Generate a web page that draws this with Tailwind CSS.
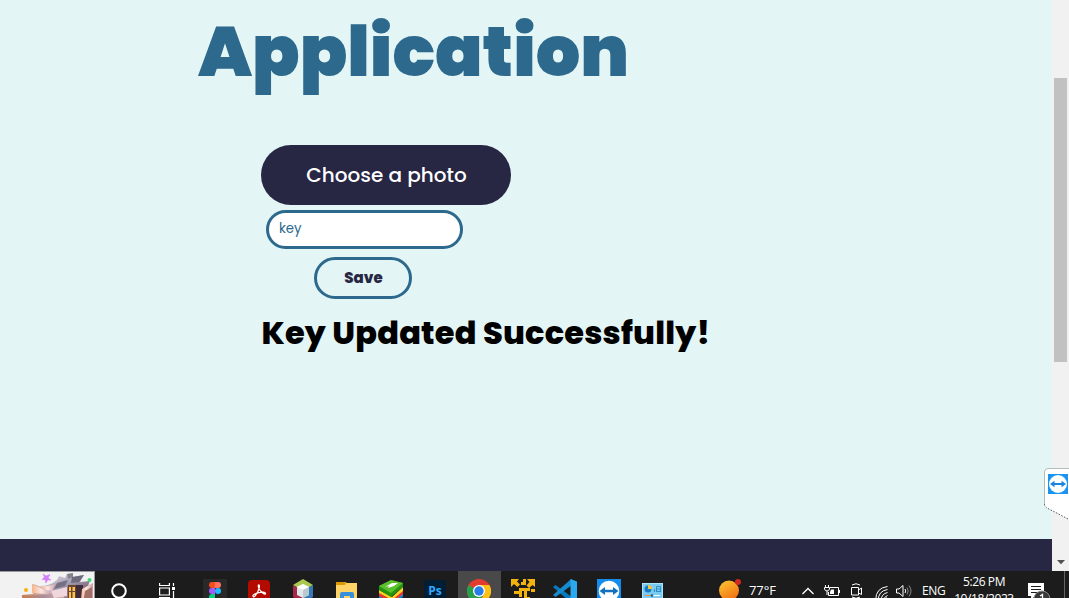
<!DOCTYPE html>
<html lang="en">
<head>
<meta charset="utf-8">
<title>Application</title>
<script src="https://cdn.jsdelivr.net/npm/@tailwindcss/browser@4"></script>
</head>
<body class="h-[598px] w-[1069px] overflow-hidden bg-[#e3f5f5] font-[Poppins,Inter,sans-serif]">
<div class="flex h-[598px] flex-col overflow-hidden">
  <div class="relative flex h-[571px] shrink-0">
    <div class="flex w-[1052px] flex-col">
      <main class="flex h-[539px] flex-col items-start overflow-hidden bg-[#e3f5f5]">
        <h1 class="ml-[198px] h-[145px] pt-[1px] text-[70px] leading-[101px] font-black whitespace-nowrap text-[#2c698d]">Application</h1>
        <div class="ml-[261px] flex flex-col items-start">
          <label class="flex h-[60px] w-[250px] items-center justify-center rounded-full bg-[#272643] pl-px text-[20px] font-medium whitespace-nowrap text-white">Choose a photo</label>
          <div class="mt-[5px] ml-[5px] flex h-[39px] w-[197px] items-center rounded-full border-[3px] border-[#2c698d] bg-white pb-[2px] pl-[10px] text-[13.3px] text-[#2c698d]">key</div>
          <button class="mt-[8px] ml-[53px] flex h-[42px] w-[98px] items-center justify-center rounded-full border-[3px] border-[#2c698d] pl-px text-[15px] font-extrabold text-[#272643]">Save</button>
          <h2 class="mt-[10px] h-[48px] pl-[0.5px] text-[32px] leading-[48px] font-extrabold tracking-[0.19px] whitespace-nowrap text-black">Key Updated Successfully!</h2>
        </div>
      </main>
      <footer class="h-[32px] bg-[#272643]"></footer>
    </div>
    <div class="flex w-[17px] flex-col items-center bg-[#f1f1f1]">
      <div class="mt-[78px] h-[284px] w-[13px] bg-[#c1c1c1]"></div>
      <svg class="mt-[198px] h-[5px] w-[8px]" viewBox="0 0 8 5"><path d="M0 0H8L4 4.3Z" fill="#505050"/></svg>
    </div>
    <svg class="absolute top-[468px] left-[1044px] h-[54px] w-[25px]" viewBox="0 0 25 54">
      <path d="M26 .5H4Q.5 .5 .5 4V36Q.5 38.500 3 40L26 52Z" fill="#fff"/>
      <path d="M26 .5H4Q.5 .5 .5 4V36" fill="none" stroke="#b5bcbc"/>
      <path d="M.5 36Q.5 38.500 3 40L26 52" fill="none" stroke="#555" stroke-dasharray="1.500 1.500"/>
      <rect x="4" y="6" width="20" height="20" fill="#1a94f0"/><circle cx="14" cy="16" r="9" fill="#fff"/>
      <path d="M6 16L10.500 12.700V15H17.500V12.700L22 16L17.500 19.300V17H10.500V19.300Z" fill="#1a84e0"/>
    </svg>
  </div>

  <div class="flex h-[40px] shrink-0 bg-[#1c1c1c] font-['Open_Sans',sans-serif] text-[12px] text-white">
    <svg class="h-[40px] w-[95px] shrink-0" viewBox="0 0 95 40">
      <defs>
        <linearGradient id="roof" x2="1"><stop stop-color="#c58052"/><stop offset=".35" stop-color="#d9bcc4"/><stop offset=".7" stop-color="#8a6874"/><stop offset="1" stop-color="#e8c4a8"/></linearGradient>
        <linearGradient id="sail" x2="1" y2="1"><stop stop-color="#f9ecec"/><stop offset=".5" stop-color="#a3a0b6"/><stop offset="1" stop-color="#6a4150"/></linearGradient>
        <linearGradient id="base" x2="1"><stop stop-color="#c77f4e"/><stop offset=".5" stop-color="#a98d9c"/><stop offset="1" stop-color="#d9b3a8"/></linearGradient>
        <linearGradient id="wing" x2="1"><stop stop-color="#f6b48c"/><stop offset=".5" stop-color="#fbe6e0"/><stop offset="1" stop-color="#c99aa0"/></linearGradient>
      </defs>
      <path fill="#f2f2f2" d="M0 0H95V40H0Z"/><path fill="#9a9a9a" d="M0 0H95V1H0ZM94 0H95V40H94Z"/>
      <path d="M22 24L33 23V13L44 17L63 11L92 14L93 40H22Z" fill="url(#roof)"/>
      <path d="M32 13L45 19L51 23L32 22Z" fill="url(#wing)"/>
      <path d="M40 15Q50 15 57 9L59 5L65 7L67 3L73 2V6L84 4L80 11L90 10L86 19L68 16L58 24Z" fill="url(#sail)"/>
      <path d="M40 15Q50 16 56 12L52 20L46 19Z" fill="url(#wing)"/>
      <path d="M57 12L68 9L65 15L54 18Z" fill="#767182"/><path d="M67 3L73 2V6L68 8Z" fill="#85828e"/><path d="M72 6L84 4L79 11L71 12Z" fill="#6d6a7c"/>
      <path d="M22 25L65 22L60 40H22Z" fill="url(#base)"/><path d="M51 20L67 16V25L54 27Z" fill="#f0d6dd"/>
      <path d="M68 14H76V40H68Z" fill="#6e4432"/><path d="M76 14H83V40H76Z" fill="#3f2c3a"/><path d="M69 16H71V20H69ZM69 21H71V40H69ZM72.500 16H75V20H72.500ZM72.500 21H75V40H72.500Z" fill="#f8c64f"/>
      <path d="M82 18L93 12V40H80Z" fill="url(#wing)"/><path d="M85 20L92 16V28L83 32Z" fill="#a27068"/>
      <path d="M43 3L46 5L50 3.500L48 7L51 9L47.500 9L46 12L45 8.500L42 8.500L44.500 6Z" fill="#d77cf8" stroke="#d77cf8" stroke-width=".6"/>
      <circle cx="26" cy="19" r="2" fill="#f9af0b"/><circle cx="89.500" cy="9" r="2" fill="#40d575"/>
    </svg>
    <div class="flex w-[48px] items-center justify-center"><svg class="h-[18px] w-[18px]" viewBox="0 0 18 18"><circle cx="9" cy="9" r="6.800" fill="none" stroke="#fff" stroke-width="2"/></svg></div>
    <div class="flex w-[50px] items-center justify-center"><svg class="mr-[2px] h-[16px] w-[16px]" viewBox="0 0 16 16" fill="none" stroke="#fff" stroke-width="1.200"><path d="M.6 0V2.500H10.400V0M.6 5H10.400V12H.6ZM.6 16V14.500H10.400V16M14.500 0V3M14.500 8V16"/><path d="M13 4H16V7H13Z" fill="#fff" stroke="none"/></svg></div>
    <div class="flex w-[44px] items-center justify-center"><svg class="size-[24px]" viewBox="0 0 24 24"><rect width="24" height="24" rx="1" fill="#292929"/><path d="M12 3H9A3 3 0 0 0 9 9H12Z" fill="#f24e1e"/><path d="M12 3H15A3 3 0 0 1 15 9H12Z" fill="#ff7262"/><path d="M12 9H9A3 3 0 0 0 9 15H12Z" fill="#a259ff"/><circle cx="15" cy="12" r="3" fill="#1abcfe"/><path d="M12 15H9A3 3 0 1 0 12 18Z" fill="#0acf83"/></svg></div>
    <div class="flex w-[44px] items-center justify-center"><svg class="size-[22px]" viewBox="0 0 22 22"><rect width="22" height="22" rx="4" fill="#b30b00"/><path d="M5 16C4 14 17 10 17.500 13.500C17 16 9 9 10.500 5C12 4 12 10 7 16Q5.500 17.500 5 16Z" fill="none" stroke="#fff" stroke-width="1.300"/></svg></div>
    <div class="flex w-[44px] items-center justify-center"><svg class="size-[24px]" viewBox="0 0 24 24"><path d="M12 0L22 6L12 12L2 6Z" fill="#acc94f"/><path d="M2 6L12 12V24L2 18Z" fill="#a7284b"/><path d="M22 6L12 12V24L22 18Z" fill="#3678b8"/><path d="M12 5L18 8V16L12 19L6 16V8Z" fill="#dfe7e8"/><path d="M12 5L18 8L12 11L6 8Z" fill="#fff"/><path d="M12 11L18 8V16L12 19Z" fill="#b9c9d0"/></svg></div>
    <div class="flex w-[44px] items-center justify-center"><svg class="h-[20px] w-[22px]" viewBox="0 0 22 20"><path d="M0 1H9L11 2H21V20H0Z" fill="#ffd365"/><path d="M0 1H8.500L10 3L8.500 4H0Z" fill="#dc9800"/><path d="M4 20V13Q4 11 6 11H16Q18 11 18 13V20H14V15H8V20Z" fill="#368fd8"/></svg></div>
    <div class="flex w-[44px] items-center justify-center"><svg class="size-[24px]" viewBox="0 0 24 24"><path d="M0 17L13 23L24 14V18L13 24L0 20Z" fill="#1683d8"/><path d="M0 14L13 21L24 11V15L13 24L0 17Z" fill="#ed3833"/><path d="M0 11L13 18L24 8V12L13 21L0 14Z" fill="#ffd323"/><path d="M12 1L24 4V8L12 18L0 11V7Z" fill="#259510"/><path d="M12 1L24 4L12 14L0 7Z" fill="#5cc02c"/><path d="M6 8L13 4H19L15 7L9 9L10 7Z" fill="#fff"/></svg></div>
    <div class="flex w-[44px] items-center justify-center"><div class="flex size-[22px] items-center justify-center rounded-[4px] bg-[#001e36] pb-[1px] text-[12px] font-bold text-[#31a8ff]">Ps</div></div>
    <div class="flex w-[44px] items-center justify-center bg-[linear-gradient(90deg,#1c1c1c_1px,#494949_1px)]"><svg class="size-[24px]" viewBox="0 0 24 24"><circle cx="12" cy="12" r="12" fill="#e33b2e"/><path d="M12 12L1.600 6A12 12 0 0 0 12 24L17.200 15Z" fill="#27a14b"/><path d="M12 6H22.400A12 12 0 0 1 12 24L17.200 15Z" fill="#fbc116"/><circle cx="12" cy="12" r="6" fill="#fff"/><circle cx="12" cy="12" r="4.700" fill="#287de8"/></svg></div>
    <div class="flex w-[44px] items-center justify-center"><svg class="size-[24px]" viewBox="0 0 24 24" fill="#f3b50b"><path d="M0 0H8L6 2.500L9 5.500L6.500 8L3 5L0 8ZM16 0H24V8L21.500 6L18 9L15.500 6.500L18.500 3ZM12 0H15V6H10V3H12ZM8 9H19V12H16V18H19V20H13V12H11V18H8V15H3V12H8ZM20 10H24V13H20Z"/></svg></div>
    <div class="flex w-[43px] items-center justify-center pr-[1px]"><svg class="mr-[2px] size-[24px]" viewBox="0 0 24 24"><path d="M0 8L2.500 6L19 18V24L17 23Z" fill="#0879bf"/><path d="M0 16L2.500 18L19 6V0L17 1Z" fill="#168bd0"/><path d="M17.500 0L24 2.500V21.500L17.500 24Z" fill="#2aa9ef"/></svg></div>
    <div class="flex w-[43px] items-center justify-center"><svg class="mr-[2px] size-[24px]" viewBox="0 0 24 24"><rect width="24" height="24" fill="#138ceb"/><circle cx="12" cy="12" r="10.300" fill="#fff"/><path d="M2.500 12L8 8V10.800H16V8L21.500 12L16 16V13.200H8V16Z" fill="#1272c0"/></svg></div>
    <div class="flex w-[43px] items-center justify-center"><svg class="h-[16px] w-[21px]" viewBox="0 0 21 16"><rect x=".5" y=".5" width="20" height="15" fill="#7acbf1" stroke="#aee2fa"/><circle cx="6" cy="6" r="3.500" fill="#167cc6"/><path d="M6 6V2A4 4 0 0 1 10 6Z" fill="#ffc239"/><path d="M12.500 6V9M14.500 3.500V9M14.500 3.500H18.500V9M14.500 6H18.500M14.500 8.500H18.500" fill="none" stroke="#2f8cc4"/><path d="M3 12.500H9" stroke="#f68b2a"/><path d="M9 12.500H18" stroke="#fff"/><circle cx="10" cy="12.500" r="1.300" fill="#185f98"/></svg></div>

    <div class="ml-[44px] flex items-center"><svg class="h-[24px] w-[24px]" viewBox="0 0 24 24"><defs><linearGradient id="sun" x1=".2" y1="0" x2=".8" y2="1"><stop stop-color="#fcc22f"/><stop offset="1" stop-color="#f16b13"/></linearGradient></defs><circle cx="11" cy="11.500" r="10" fill="url(#sun)"/><circle cx="20" cy="3" r="3" fill="#d5281d"/></svg></div>
    <div class="ml-[7px] flex w-[53px] items-center text-[13px] tracking-[-0.1px]">77°F</div>
    <div class="flex w-[22px] items-center"><svg class="h-[8px] w-[12px]" viewBox="0 0 12 8"><path d="M.5 7L6 1.500L11.500 7" fill="none" stroke="#fff" stroke-width="1.300"/></svg></div>
    <div class="flex w-[27px] items-center"><svg class="h-[12px] w-[16px]" viewBox="0 0 16 12" fill="none" stroke="#fff"><path d="M6 2.500H14.500V10.500H4.500V7M15.500 5V8M1.500 0V2M4.500 0V2M.5 2.500H5.500V4Q5 6 3 6Q1 6 .5 4ZM3 6V10"/><path d="M7 4.500H10V9H6V7Z" fill="#fff" stroke="none"/></svg></div>
    <div class="flex w-[24px] items-center"><svg class="h-[16px] w-[12px]" viewBox="0 0 12 16" fill="none" stroke="#fff"><path d="M.5 4.500H7.500V12H.5ZM7.500 7L10.500 5V11.500L7.500 10M1 2Q5 -.5 9 2M1 14Q5 16.500 9 14"/></svg></div>
    <div class="flex w-[21px] items-center"><svg class="mt-[4px] h-[16px] w-[13px]" viewBox="0 0 13 16" fill="none" stroke="#fff"><path d="M.7 15Q.7 3 12.500 1.500M3.200 16Q3 6 12.500 4.500M6 16Q6 9 12.500 7.500M8.500 16Q8.500 12 12.500 10.500"/><circle cx="11.500" cy="14" r="1" fill="#fff"/></svg></div>
    <div class="flex w-[26px] items-center"><svg class="h-[14px] w-[17px]" viewBox="0 0 17 14" fill="none" stroke="#fff"><path d="M.5 5H3L7 1.500V12.500L3 9H.5ZM9 5Q10.500 7 9 9"/><path d="M11 3.500Q13.500 7 11 10.500M13 1.500Q17 7 13 12.500" stroke="#888"/></svg></div>
    <div class="flex w-[32px] items-center tracking-[-0.3px]">ENG</div>
    <div class="flex w-[60px] flex-col items-center pt-[2px] leading-[17px] tracking-[-0.4px] whitespace-nowrap"><span>5:26 PM</span><span>10/18/2023</span></div>
    <svg class="ml-[13px] h-[40px] w-[24px]" viewBox="0 0 24 40"><path d="M1 12H17V25H8L4 29V25H1Z" fill="#fff"/><path d="M4 15.500H14M4 18.500H14M4 21.500H10" stroke="#1c1c1c"/><circle cx="15" cy="28" r="8" fill="#383838" stroke="#888"/><path d="M13 25L15.500 23.500V32" stroke="#fff" stroke-width="1.300" fill="none"/></svg>
    <div class="ml-[13px] w-px bg-[#666]"></div>
  </div>
</div>
</body>
</html>
